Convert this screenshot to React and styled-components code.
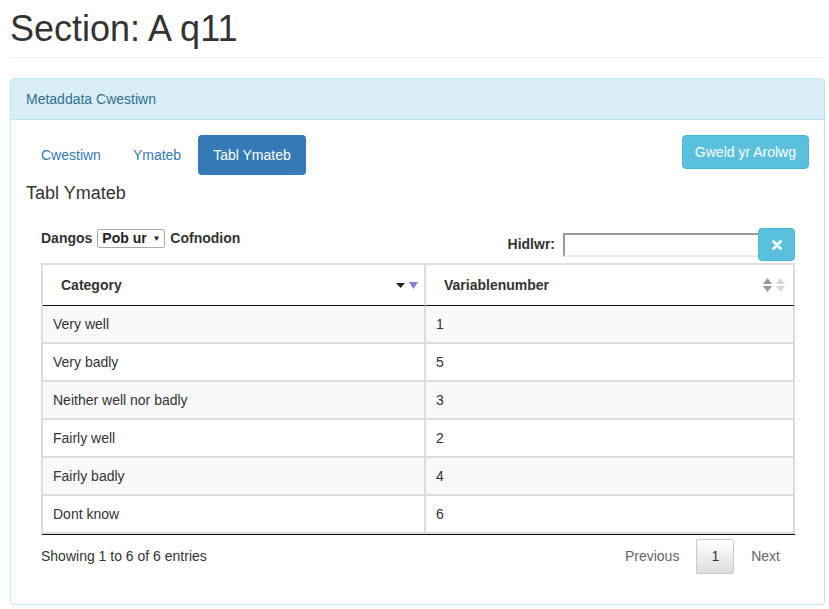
import styled, { createGlobalStyle } from "styled-components";

const rows = [
  { category: "Very well", value: "1" },
  { category: "Very badly", value: "5" },
  { category: "Neither well nor badly", value: "3" },
  { category: "Fairly well", value: "2" },
  { category: "Fairly badly", value: "4" },
  { category: "Dont know", value: "6" },
];

const tabs = ["Cwestiwn", "Ymateb", "Tabl Ymateb"];

const GlobalStyle = createGlobalStyle`
  * {
    box-sizing: border-box;
  }

  body {
    margin: 0;
    background: #fff;
    color: #333;
    font-family: "Liberation Sans", Arial, sans-serif;
    font-size: 14px;
    line-height: 1.42857;
  }
`;

const Page = styled.div`
  padding: 9px 4px 0 10px;
`;

const PageHeader = styled.div`
  border-bottom: 1px solid #eee;
  padding-bottom: 8px;
  margin-bottom: 20px;
`;

const Title = styled.h1`
  margin: 0;
  font-size: 36px;
  font-weight: 500;
  line-height: 1.1;
`;

const Panel = styled.div`
  border: 1px solid #bce8f1;
  border-radius: 4px;
`;

const PanelHeading = styled.div`
  background: #d9edf7;
  color: #31708f;
  padding: 10px 15px;
  line-height: 20px;
  border-bottom: 1px solid #bce8f1;
  border-radius: 3px 3px 0 0;
`;

const PanelBody = styled.div`
  padding: 15px 15px 30px;
`;

const TopRow = styled.div`
  display: flex;
  justify-content: space-between;
  align-items: flex-start;
`;

const Pills = styled.div`
  display: flex;
  gap: 2px;
`;

const Pill = styled.div`
  padding: 10px 15px;
  line-height: 20px;
  border-radius: 4px;
  color: ${(p) => (p.$active ? "#fff" : "#337ab7")};
  background: ${(p) => (p.$active ? "#337ab7" : "transparent")};
  cursor: pointer;
`;

const InfoButton = styled.button`
  font: inherit;
  padding: 6px 12px;
  line-height: 20px;
  color: #fff;
  background: #5bc0de;
  border: 1px solid #46b8da;
  border-radius: 4px;
`;

const SubHeading = styled.h4`
  margin: 9px 0 0;
  font-size: 18px;
  font-weight: 500;
  line-height: 1.1;
`;

const TableWrap = styled.div`
  margin-top: 25px;
  padding: 0 14px 0 15px;
`;

const Controls = styled.div`
  display: flex;
  justify-content: space-between;
  align-items: flex-start;
`;

const Length = styled.div`
  display: flex;
  align-items: center;
  gap: 5px;
  margin-top: 1px;
  font-weight: bold;
  line-height: 19px;
`;

const FakeSelect = styled.div`
  display: flex;
  align-items: center;
  justify-content: space-between;
  width: 68px;
  height: 19px;
  padding: 0 4px;
  border: 1px solid #a9a9a9;
  border-radius: 2px;
  background: #fff;
  color: #222;
`;

const Caret = styled.span`
  font-size: 8px;
  line-height: 1;
`;

const Filter = styled.div`
  display: flex;
  align-items: center;
  height: 33px;
  font-weight: bold;
`;

const FilterLabel = styled.span`
  margin-right: 8px;
`;

const FilterInput = styled.input`
  width: 195px;
  height: 24px;
  border: none;
  border-top: 2px solid #9a9a9a;
  border-left: 2px solid #9a9a9a;
  border-bottom: 2px solid #ececec;
  outline: none;
  font: inherit;
  font-weight: normal;
`;

const ClearButton = styled.button`
  display: flex;
  align-items: center;
  justify-content: center;
  width: 37px;
  height: 33px;
  padding: 0;
  background: #5bc0de;
  border: 1px solid #46b8da;
  border-radius: 4px;
`;

const Table = styled.table`
  width: 100%;
  margin-top: 2px;
  table-layout: fixed;
  border-collapse: separate;
  border-spacing: 0;
  border-top: 2px solid #ddd;
  border-left: 2px solid #ddd;
  border-bottom: 1px solid #111;
`;

const Th = styled.th`
  width: ${(p) => p.$w || "auto"};
  padding: 10px ${(p) => p.$pr}px 10px 18px;
  line-height: 20px;
  text-align: left;
  font-weight: bold;
  border-right: 2px solid #ddd;
  border-bottom: 1px solid #111;
`;

const HeadInner = styled.div`
  display: flex;
  align-items: center;
  justify-content: space-between;
`;

const SortIcons = styled.div`
  display: flex;
  align-items: center;
  gap: ${(p) => p.$gap}px;
`;

const Tr = styled.tr`
  background: ${(p) => (p.$odd ? "#f9f9f9" : "#fff")};
`;

const Td = styled.td`
  padding: 8px 10px;
  line-height: 20px;
  border-right: 2px solid #ddd;
  border-bottom: 2px solid #ddd;
`;

const Footer = styled.div`
  display: flex;
  justify-content: space-between;
  align-items: center;
  margin-top: 4px;
`;

const Paginate = styled.div`
  display: flex;
  align-items: center;
`;

const PageButton = styled.div`
  margin-left: 2px;
  padding: 7px 14px;
  line-height: 19px;
  border: 1px solid ${(p) => (p.$current ? "#cacaca" : "transparent")};
  border-radius: 2px;
  color: ${(p) => (p.$current ? "#333" : "#666")};
  background: ${(p) =>
    p.$current ? "linear-gradient(to bottom, #fff 0%, #dcdcdc 100%)" : "transparent"};
`;

const SortedDown = () => (
  <SortIcons $gap={4}>
    <svg width="9" height="5" viewBox="0 0 9 5">
      <path d="M0 0h9L4.5 5z" fill="#222" />
    </svg>
    <svg width="9" height="7" viewBox="0 0 9 7">
      <path d="M0 0h9L4.5 7z" fill="#7f7fdf" />
    </svg>
  </SortIcons>
);

const Sortable = () => (
  <SortIcons $gap={4}>
    <svg width="9" height="14" viewBox="0 0 9 14">
      <path d="M4.5 0L9 6H0z M0 8h9L4.5 14z" fill="#9a9a9a" />
    </svg>
    <svg width="9" height="14" viewBox="0 0 9 14">
      <path d="M4.5 0L9 6H0z M0 8h9L4.5 14z" fill="#d6d6d6" />
    </svg>
  </SortIcons>
);

const ClearIcon = () => (
  <svg width="10" height="10" viewBox="0 0 10 10">
    <path d="M1.5 1.5l7 7M8.5 1.5l-7 7" stroke="#fff" strokeWidth="2.8" strokeLinecap="round" />
  </svg>
);

export default function App() {
  return (
    <>
      <GlobalStyle />
      <Page>
        <PageHeader>
          <Title>Section: A q11</Title>
        </PageHeader>
        <Panel>
          <PanelHeading>Metaddata Cwestiwn</PanelHeading>
          <PanelBody>
            <TopRow>
              <Pills>
                {tabs.map((t) => (
                  <Pill key={t} $active={t === "Tabl Ymateb"}>
                    {t}
                  </Pill>
                ))}
              </Pills>
              <InfoButton>Gweld yr Arolwg</InfoButton>
            </TopRow>
            <SubHeading>Tabl Ymateb</SubHeading>
            <TableWrap>
              <Controls>
                <Length>
                  Dangos
                  <FakeSelect>
                    Pob ur <Caret>▼</Caret>
                  </FakeSelect>
                  Cofnodion
                </Length>
                <Filter>
                  <FilterLabel>Hidlwr:</FilterLabel>
                  <FilterInput type="text" />
                  <ClearButton>
                    <ClearIcon />
                  </ClearButton>
                </Filter>
              </Controls>
              <Table>
                <thead>
                  <tr>
                    <Th $w="383px" $pr={6}>
                      <HeadInner>
                        Category
                        <SortedDown />
                      </HeadInner>
                    </Th>
                    <Th $pr={8}>
                      <HeadInner>
                        Variablenumber
                        <Sortable />
                      </HeadInner>
                    </Th>
                  </tr>
                </thead>
                <tbody>
                  {rows.map((r, i) => (
                    <Tr key={r.category} $odd={i % 2 === 0}>
                      <Td>{r.category}</Td>
                      <Td>{r.value}</Td>
                    </Tr>
                  ))}
                </tbody>
              </Table>
              <Footer>
                <span>Showing 1 to 6 of 6 entries</span>
                <Paginate>
                  <PageButton>Previous</PageButton>
                  <PageButton $current>1</PageButton>
                  <PageButton>Next</PageButton>
                </Paginate>
              </Footer>
            </TableWrap>
          </PanelBody>
        </Panel>
      </Page>
    </>
  );
}
